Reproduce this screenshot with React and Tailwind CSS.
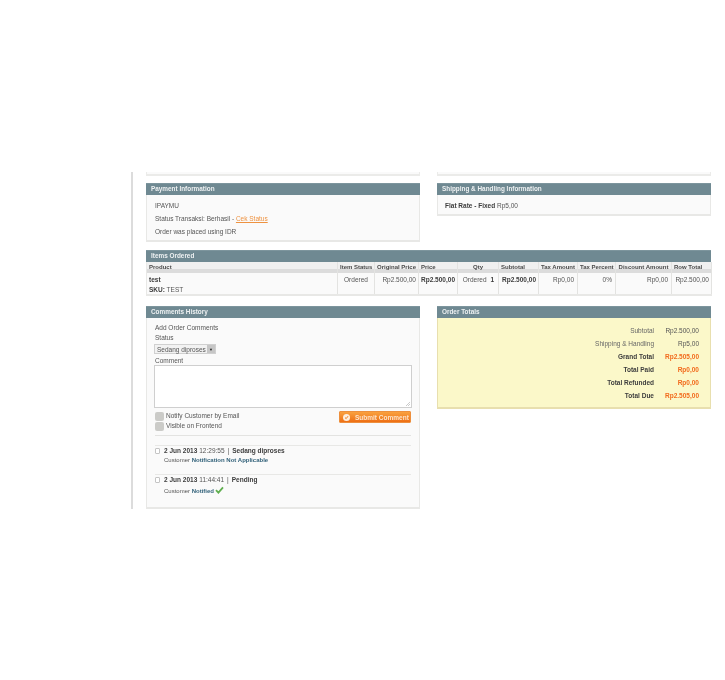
import React from 'react';

const sans = 'font-["Liberation_Sans",Arial,sans-serif]';

const columns = [
  { label: 'Product', w: 'w-[191px]', align: 'text-left' },
  { label: 'Item Status', w: 'w-[37px]', align: 'text-center' },
  { label: 'Original Price', w: 'w-[44px]', align: 'text-center' },
  { label: 'Price', w: 'w-[39px]', align: 'text-left' },
  { label: 'Qty', w: 'w-[41px]', align: 'text-center' },
  { label: 'Subtotal', w: 'w-[40px]', align: 'text-left' },
  { label: 'Tax Amount', w: 'w-[39px]', align: 'text-center' },
  { label: 'Tax Percent', w: 'w-[38px]', align: 'text-center' },
  { label: 'Discount Amount', w: 'w-[56px]', align: 'text-center' },
  { label: 'Row Total', w: 'w-[40px]', align: 'text-left' },
];

const totals = [
  { label: 'Subtotal', value: 'Rp2.500,00' },
  { label: 'Shipping & Handling', value: 'Rp5,00' },
  { label: 'Grand Total', value: 'Rp2.505,00', strong: true },
  { label: 'Total Paid', value: 'Rp0,00', strong: true },
  { label: 'Total Refunded', value: 'Rp0,00', strong: true },
  { label: 'Total Due', value: 'Rp2.505,00', strong: true },
];

function Header({ title }) {
  return (
    <div className="h-[12px] border-t border-[#7d959d] bg-[#6f8992] pl-[5px] text-[6.4px] leading-[10px] font-bold text-[#eef1f2]">
      {title}
    </div>
  );
}

function Box({ title, className, children }) {
  return (
    <div className="w-[274px]">
      <Header title={title} />
      <div className={className}>{children}</div>
    </div>
  );
}

function Checkbox({ label }) {
  return (
    <div className="flex h-[10px] items-center gap-[2px]">
      <span className="mt-[1px] h-[9px] w-[9px] rounded-[2px] bg-[#cbcbc8]" />
      <span className="-mt-[1px]">{label}</span>
    </div>
  );
}

function HistoryItem({ date, time, status, children, className }) {
  return (
    <div className={`border-t border-[#e8e8e6] ${className}`}>
      <div className="flex items-center">
        <span className="mr-[4px] mt-[1px] h-[6px] w-[5px] rounded-[1px] border border-[#c4c4c4] bg-white" />
        <span className="font-bold text-[#3d3d3d]">{date}</span>
        <span className="ml-[2px]">{time}</span>
        <span className="mx-[3px]">|</span>
        <span className="font-bold text-[#3d3d3d]">{status}</span>
      </div>
      <div className="ml-[9px] flex items-center text-[6px]">{children}</div>
    </div>
  );
}

export default function App() {
  return (
    <div className={`h-[680px] w-[725px] bg-white pt-[172px] text-[6.5px] leading-[9px] text-[#555] antialiased blur-[0.3px] ${sans}`}>
      <div className="ml-[131px] flex h-[337px] w-[580px] flex-col border-l-2 border-[#dcdcdc] pl-[13px]">
        {/* end of the boxes above, cut off by the picture */}
        <div className="flex justify-between">
          <div className="h-[4px] w-[274px] border-x border-b-2 border-[#ebebe9] bg-[#fafafa]" />
          <div className="h-[4px] w-[274px] border-x border-b-2 border-[#ebebe9] bg-[#fafafa]" />
        </div>

        <div className="mt-[7px] flex h-[59px] items-start justify-between">
          <Box title="Payment Information" className="h-[47px] border-x border-b-2 border-[#e8e8e6] bg-[#fafafa] pl-[8px] pt-[6px]">
            <p>IPAYMU</p>
            <p className="mt-[4px]">
              Status Transaksi: Berhasil - <a className="text-[#ee9240] underline">Cek Status</a>
            </p>
            <p className="mt-[4px]">Order was placed using IDR</p>
          </Box>
          <Box title="Shipping & Handling Information" className="h-[21px] border-x border-b-2 border-[#e8e8e6] bg-[#fafafa] pl-[7px] pt-[6px]">
            <b className="text-[#3d3d3d]">Flat Rate - Fixed</b> Rp5,00
          </Box>
        </div>

        <div className="mt-[8px] w-[565px]">
          <Header title="Items Ordered" />
          <table className="w-full table-fixed border-collapse border-b-2 border-l border-[#e8e8e6] bg-[#fafafa]">
            <thead>
              <tr className="h-[11px] text-[6px] font-bold text-[#4a4a4a]">
                {columns.map((c) => (
                  <th key={c.label} className={`${c.w} ${c.align} overflow-hidden border-r border-[#e3e3e1] bg-[linear-gradient(#f0f0f0_60%,#dcdcdc_60%)] px-[2px] font-bold whitespace-nowrap`}>
                    {c.label}
                  </th>
                ))}
              </tr>
            </thead>
            <tbody>
              <tr className="h-[22px] align-top">
                <td className="border-r border-[#e3e3e1] px-[2px] pt-[2px]">
                  <b className="block text-[#3d3d3d]">test</b>
                  <span className="mt-[1px] block"><b className="text-[#3d3d3d]">SKU:</b> TEST</span>
                </td>
                <td className="border-r border-[#e3e3e1] pt-[2px] text-center">Ordered</td>
                <td className="border-r border-[#e3e3e1] pr-[2px] pt-[2px] text-right whitespace-nowrap">Rp2.500,00</td>
                <td className="border-r border-[#e3e3e1] pr-[2px] pt-[2px] text-right font-bold whitespace-nowrap text-[#3d3d3d]">Rp2.500,00</td>
                <td className="border-r border-[#e3e3e1] pr-[4px] pt-[2px] text-right whitespace-nowrap">Ordered <b className="ml-[2px] text-[#3d3d3d]">1</b></td>
                <td className="border-r border-[#e3e3e1] pr-[2px] pt-[2px] text-right font-bold whitespace-nowrap text-[#3d3d3d]">Rp2.500,00</td>
                <td className="border-r border-[#e3e3e1] pr-[3px] pt-[2px] text-right">Rp0,00</td>
                <td className="border-r border-[#e3e3e1] pr-[3px] pt-[2px] text-right">0%</td>
                <td className="border-r border-[#e3e3e1] pr-[3px] pt-[2px] text-right">Rp0,00</td>
                <td className="border-r border-[#e3e3e1] pr-[2px] pt-[2px] text-right whitespace-nowrap">Rp2.500,00</td>
              </tr>
            </tbody>
          </table>
        </div>

        <div className="mt-[10px] flex items-start justify-between">
          <Box title="Comments History" className="h-[191px] border-x border-b-2 border-[#e8e8e6] bg-[#fafafa] px-[8px] pt-[5px]">
            <p>Add Order Comments</p>
            <p className="mt-[1px]">Status</p>
            <div className="mt-[2px] -ml-[1px] flex h-[10px] w-[62px] items-center justify-between border border-[#d0d0d0] bg-[#f2f2f2] pl-[2px] whitespace-nowrap">
              <span>Sedang diproses</span>
              <span className="flex h-full w-[8px] items-center justify-center bg-[#c6c6c6] text-[4px] text-[#222]">▼</span>
            </div>
            <p className="mt-[2px]">Comment</p>
            <div className="relative -ml-[1px] h-[43px] w-[258px] border border-[#cfcfcf] bg-white">
              <svg className="absolute right-0 bottom-0" width="6" height="6" viewBox="0 0 6 6">
                <path d="M1 5L5 1M3 5L5 3" stroke="#b5b5b5" strokeWidth="0.7" />
              </svg>
            </div>
            <div className="mt-[3px] flex items-start justify-between">
              <div>
                <Checkbox label="Notify Customer by Email" />
                <Checkbox label="Visible on Frontend" />
              </div>
              <button className="flex h-[12px] w-[72px] items-center rounded-[1px] border border-[#ed8f3d] bg-[linear-gradient(#f9a13f,#ee6f14)] pl-[3px] text-[6.5px] font-bold whitespace-nowrap text-[#fde4cb]">
                <span className="mr-[5px] flex h-[7px] w-[7px] items-center justify-center rounded-full bg-[#fdeedd]">
                  <svg width="5" height="5" viewBox="0 0 5 5">
                    <path d="M1 2.6L2.2 3.6L4 1.2" stroke="#ef7d1e" strokeWidth="1" fill="none" />
                  </svg>
                </span>
                Submit Comment
              </button>
            </div>
            <div className="mt-[4px] border-t border-[#e3e3e1]" />
            <HistoryItem date="2 Jun 2013" time="12:29:55" status="Sedang diproses" className="mt-[9px]">
              <span className="mt-[1px]">Customer <b className="text-[#33627a]">Notification Not Applicable</b></span>
            </HistoryItem>
            <HistoryItem date="2 Jun 2013" time="11:44:41" status="Pending" className="mt-[9px]">
              <span className="mt-[3px]">Customer <b className="text-[#33627a]">Notified</b></span>
              <svg className="ml-[1px]" width="9" height="8" viewBox="0 0 9 8">
                <path d="M1 4.2L3.4 6.6L8 1.4" stroke="#5fae4e" strokeWidth="1.8" fill="none" />
              </svg>
            </HistoryItem>
          </Box>
          <Box title="Order Totals" className="h-[91px] border-x border-b-2 border-[#e8dfae] bg-[#fbf8c9] pr-[11px] pt-[8px]">
            <div className="flex flex-col gap-[4px]">
              {totals.map((t) => (
                <div key={t.label} className="flex h-[9px] justify-end">
                  <span className={t.strong ? 'font-bold text-[#3d3d3d]' : 'text-[#666]'}>{t.label}</span>
                  <span className={`w-[45px] text-right ${t.strong ? 'font-bold text-[#f26b1d]' : 'text-[#555]'}`}>{t.value}</span>
                </div>
              ))}
            </div>
          </Box>
        </div>
      </div>
    </div>
  );
}
